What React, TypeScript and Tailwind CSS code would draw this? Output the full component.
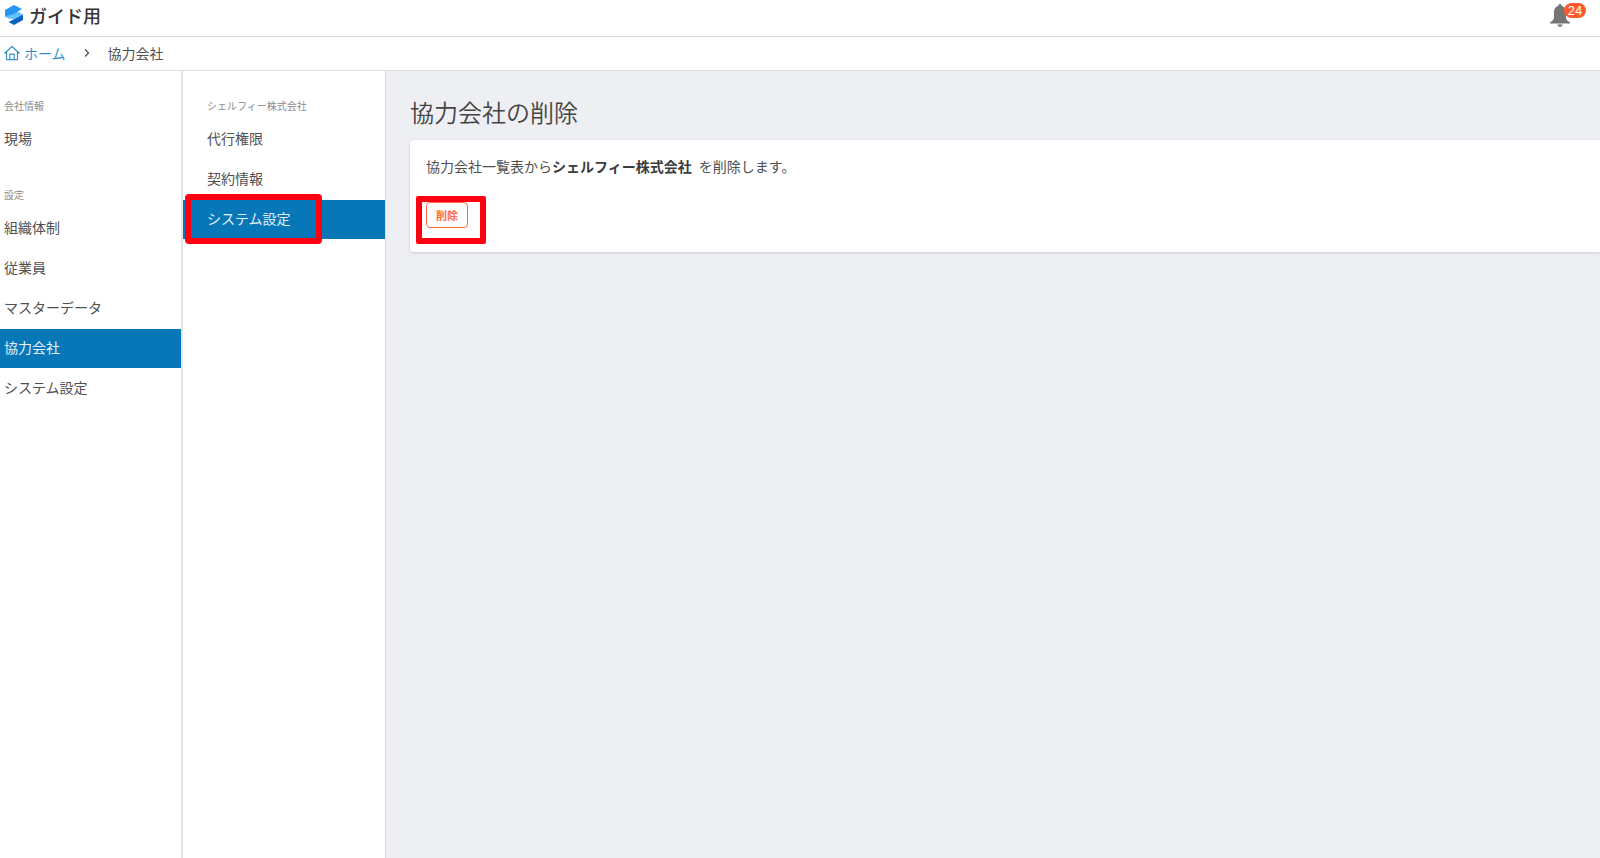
import React from 'react';

interface NavItem {
  label: string;
  active?: boolean;
  marked?: boolean;
}

interface NavGroupProps {
  title: string;
  items: NavItem[];
  indent: string;
}

const companyItems: NavItem[] = [{ label: '現場' }];

const settingItems: NavItem[] = [
  { label: '組織体制' },
  { label: '従業員' },
  { label: 'マスターデータ' },
  { label: '協力会社', active: true },
  { label: 'システム設定' },
];

const partnerItems: NavItem[] = [
  { label: '代行権限' },
  { label: '契約情報' },
  { label: 'システム設定', active: true, marked: true },
];

const Logo: React.FC = () => (
  <svg viewBox="0 0 18 20" className="h-5 w-[18px]" aria-hidden="true">
    <path d="M0 10.500 12.500 6.500 18 9.500 9.500 14 4 13.800 0 11.700z" fill="#64bffc" />
    <path d="M0 5 9 0l8 4-8.500 5L0 11.500z" fill="#2496f2" />
    <path d="M18 9.500V15l-9 5-5.500-3z" fill="#0c64c0" />
  </svg>
);

const HomeIcon: React.FC = () => (
  <svg viewBox="0 0 16 16" className="h-4 w-4" fill="none" stroke="currentColor" strokeWidth="1.2" strokeLinejoin="round" strokeLinecap="round" aria-hidden="true">
    <path d="M.7 8.200 8 1.500l7.300 6.700M2.500 6.800v7.900h11V6.800M5.800 14.500V9.200h4.400v5.300" />
  </svg>
);

const BellIcon: React.FC = () => (
  <svg viewBox="0 0 20 23" className="h-[23px] w-5" fill="#757575" aria-hidden="true">
    <path d="M10 0c1 0 1.600.7 1.600 1.700C14.500 2.500 16 5 16 8v5c0 2.500 1.500 4 4 5.500v1H0v-1C2.500 17 4 15.500 4 13V8c0-3 1.500-5.500 4.400-6.300C8.400.7 9 0 10 0zM7.500 20.500h5c0 1.500-1 2.300-2.500 2.300s-2.500-.8-2.500-2.300z" />
  </svg>
);

const NavGroup: React.FC<NavGroupProps> = ({ title, items, indent }) => (
  <section>
    <h2 className={`mb-1.5 text-[10px] leading-4 text-[#8c8c8c] ${indent}`}>{title}</h2>
    <ul className="flex flex-col gap-px">
      {items.map(item => (
        <li key={item.label} className="relative">
          <a
            href="#"
            aria-current={item.active ? 'page' : undefined}
            className={`flex h-[39px] items-center pb-1 text-sm ${indent} ${item.active ? 'bg-[#0877b8] text-[#e3f1fa]' : 'text-[#505050]'}`}
          >
            {item.label}
          </a>
          {item.marked && (
            <span className="pointer-events-none absolute -top-1.5 left-0.5 h-[50px] w-[137px] rounded border-6 border-[#ff0010]" />
          )}
        </li>
      ))}
    </ul>
  </section>
);

const App: React.FC = () => (
  <div className="flex min-h-screen flex-col bg-white font-['Noto_Sans_CJK_JP',sans-serif] text-[#505050]">
    <header className="flex h-[37px] items-center justify-between border-b border-[#dcdcdc] pr-3.5 pb-1.5 pl-[5px]">
      <div className="flex items-center gap-1.5">
        <Logo />
        <span className="text-lg leading-none font-medium text-[#333]">ガイド用</span>
      </div>
      <button type="button" aria-label="通知" className="relative flex h-7 w-9 items-center">
        <BellIcon />
        <span className="absolute top-0.5 left-3.5 flex h-[15px] w-[22px] items-center justify-center rounded-full bg-[#ff5a2b] font-['Liberation_Sans',sans-serif] text-[13px] text-white">
          24
        </span>
      </button>
    </header>

    <nav className="flex h-[34px] items-center border-b border-[#dcdcdc] pb-0.5 pl-1 text-sm">
      <a href="#" className="flex items-center gap-1 text-[#3a8fca]">
        <HomeIcon />
        ホーム
      </a>
      <svg viewBox="0 0 6 8" className="mx-[18px] h-2 w-1.5" fill="none" stroke="#505050" strokeWidth="1.3" aria-hidden="true">
        <path d="M1 .5 4.500 4 1 7.500" />
      </svg>
      <span>協力会社</span>
    </nav>

    <div className="flex flex-1">
      <aside className="flex w-[183px] shrink-0 flex-col gap-7 border-r-2 border-[#e3e3e3] pt-[27px]">
        <NavGroup title="会社情報" items={companyItems} indent="pl-1" />
        <NavGroup title="設定" items={settingItems} indent="pl-1" />
      </aside>
      <aside className="w-[203px] shrink-0 border-r border-[#dcdcdc] pt-[27px]">
        <NavGroup title="シェルフィー株式会社" items={partnerItems} indent="pl-6" />
      </aside>

      <main className="min-w-0 flex-1 bg-[#eeeff2] pt-[25px] pl-6">
        <h1 className="mb-3 text-2xl leading-8 font-[350] text-[#444]">協力会社の削除</h1>
        <div className="rounded-l bg-white px-4 pt-3.5 pb-6 shadow-[0_1px_3px_rgba(0,0,0,0.15)]">
          <p className="text-sm leading-6">
            協力会社一覧表から<b className="mr-1 text-[#3c3c3c]">シェルフィー株式会社</b> を削除します。
          </p>
          <div className="relative mt-6 w-fit">
            <button type="button" className="flex h-[26px] w-[42px] items-center justify-center rounded border border-[#ff6a45] text-[11px] font-bold text-[#ff6a45]">
              削除
            </button>
            <span className="pointer-events-none absolute -top-1.5 -left-2.5 h-12 w-[70px] rounded-xs border-6 border-[#ff0010]" />
          </div>
        </div>
      </main>
    </div>
  </div>
);

export default App;
